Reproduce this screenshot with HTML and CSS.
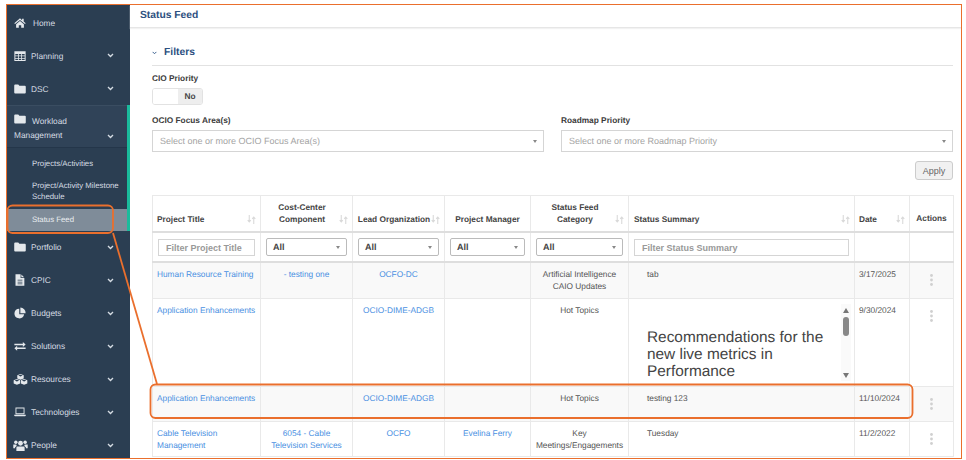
FILE: index.html
```html
<!DOCTYPE html>
<html lang="en">
<head>
    <meta charset="UTF-8">
    <title>Status Feed</title>
    <link rel="stylesheet" href="styles.css">
</head>
<body>
    <svg class="icon-defs" width="0" height="0">
        <defs>
            <symbol id="i-home" viewBox="0 0 16 16"><path d="M8 1.800 .4 8.200l1 1.200L8 3.900l6.600 5.500 1-1.200-2.700-2.300V2.400h-2.100v1.800zM2.800 9.700 8 5.300l5.200 4.400v4.700H9.600v-3.500H6.400v3.500H2.800z"/></symbol>
            <symbol id="i-table" viewBox="0 0 16 16"><path fill-rule="evenodd" d="M.5 1.500h15v13H.5zm1.300 3.700v2.200h3.500V5.200zm4.600 0v2.200h3.200V5.200zm4.300 0v2.200h3.500V5.200zM1.800 8.400v2.200h3.500V8.400zm4.600 0v2.200h3.200V8.400zm4.300 0v2.200h3.500V8.400zM1.800 11.600v1.700h3.500v-1.700zm4.600 0v1.700h3.200v-1.700zm4.300 0v1.700h3.500v-1.700z"/></symbol>
            <symbol id="i-folder" viewBox="0 0 16 16"><path d="M.3 3.300A1.300 1.300 0 0 1 1.600 2h4.100l1.400 1.700h7.300a1.300 1.300 0 0 1 1.300 1.300v7.700a1.300 1.300 0 0 1-1.300 1.300H1.600a1.300 1.300 0 0 1-1.300-1.300z"/></symbol>
            <symbol id="i-file" viewBox="0 0 16 16"><path fill-rule="evenodd" d="M2 .3h6.800v5h5v10.400H2zM4.800 7.800v1h6.400v-1zm0 2.400v1h6.400v-1zm0 2.400v1h6.400v-1zM9.800.6l3.700 3.700H9.800z"/></symbol>
            <symbol id="i-pie" viewBox="0 0 16 16"><path d="M7 2.200a6.500 6.500 0 1 0 6.500 7.600H7zM8.500.8v7.400h7A7.200 7.200 0 0 0 8.500.8z"/></symbol>
            <symbol id="i-exchange" viewBox="0 0 16 16"><path d="M.5 5h11.300V2.800L15.500 6l-3.700 3.200V7H.5zM15.500 10H4.200V7.800L.5 11l3.700 3.200V12h11.300z"/></symbol>
            <symbol id="i-cubes" viewBox="0 0 20 16"><path fill-rule="evenodd" d="M10 .6l4.300 1.700v4.300L10 8.300 5.700 6.600V2.300zM7 2.700l3 1.200 3-1.200-3-1.100zM5.200 7.200l4.300 1.700v4.300l-4.300 1.800L.9 13.200V8.900zM2.200 9.300l3 1.200 3-1.200-3-1.100zM14.800 7.200l4.300 1.700v4.300L14.800 15l-4.300-1.800V8.900zM11.800 9.300l3 1.200 3-1.200-3-1.100z"/></symbol>
            <symbol id="i-laptop" viewBox="0 0 16 16"><path fill-rule="evenodd" d="M2 2h12v9H2zm1.200 1.200v6.600h9.600V3.200zM.2 11.800h15.600v.8l-1 1H1.200l-1-1z"/></symbol>
            <symbol id="i-users" viewBox="0 0 20 16"><circle cx="10" cy="5" r="3.200"/><circle cx="3.800" cy="3.700" r="2.300"/><circle cx="16.200" cy="3.700" r="2.300"/><path d="M5.500 9.400h9l1 1.400v4.400h-11v-4.400zM.4 6.600h3.900l.7 2-2.200 1.600v1.300H.4zM19.600 6.600h-3.900l-.7 2 2.200 1.600v1.300h2.400z"/></symbol>
            <symbol id="i-sort" viewBox="0 0 10 10"><path d="M2.500 0v7.500M.8 5.800l1.700 2 1.700-2M7.500 10V2.500M5.800 4.200l1.700-2 1.700 2" fill="none" stroke="currentColor" stroke-width="1.200"/></symbol>
            <symbol id="i-chevron" viewBox="0 0 8 6"><path d="M1 1.200l3 3 3-3" fill="none" stroke="currentColor" stroke-width="1.600"/></symbol>
        </defs>
    </svg>

    <div class="frame">
        <aside class="sidebar">
            <a class="nav-item nav-home"><svg class="nav-icon"><use href="#i-home"/></svg><span>Home</span></a>
            <a class="nav-item"><svg class="nav-icon"><use href="#i-table"/></svg><span>Planning</span><svg class="chev"><use href="#i-chevron"/></svg></a>
            <a class="nav-item"><svg class="nav-icon"><use href="#i-folder"/></svg><span>DSC</span><svg class="chev"><use href="#i-chevron"/></svg></a>

            <div class="nav-group">
                <a class="nav-group-head">
                    <span class="nav-group-label"><svg class="nav-icon"><use href="#i-folder"/></svg>Workload Management</span>
                    <svg class="chev"><use href="#i-chevron"/></svg>
                </a>
                <a class="sub-item">Projects/Activities</a>
                <a class="sub-item sub-double">Project/Activity Milestone Schedule</a>
                <a class="sub-item sub-active">Status Feed</a>
            </div>

            <a class="nav-item"><svg class="nav-icon"><use href="#i-folder"/></svg><span>Portfolio</span><svg class="chev"><use href="#i-chevron"/></svg></a>
            <a class="nav-item"><svg class="nav-icon"><use href="#i-file"/></svg><span>CPIC</span><svg class="chev"><use href="#i-chevron"/></svg></a>
            <a class="nav-item"><svg class="nav-icon"><use href="#i-pie"/></svg><span>Budgets</span><svg class="chev"><use href="#i-chevron"/></svg></a>
            <a class="nav-item"><svg class="nav-icon"><use href="#i-exchange"/></svg><span>Solutions</span><svg class="chev"><use href="#i-chevron"/></svg></a>
            <a class="nav-item"><svg class="nav-icon nav-icon-wide"><use href="#i-cubes"/></svg><span>Resources</span><svg class="chev"><use href="#i-chevron"/></svg></a>
            <a class="nav-item"><svg class="nav-icon"><use href="#i-laptop"/></svg><span>Technologies</span><svg class="chev"><use href="#i-chevron"/></svg></a>
            <a class="nav-item"><svg class="nav-icon nav-icon-wide"><use href="#i-users"/></svg><span>People</span><svg class="chev"><use href="#i-chevron"/></svg></a>
        </aside>

        <main class="main">
            <header class="page-head">Status Feed</header>

            <div class="content">
                <div class="filters-head">
                    <svg class="filters-chev"><use href="#i-chevron"/></svg>
                    <span>Filters</span>
                </div>

                <label class="field-label">CIO Priority</label>
                <div class="toggle">
                    <span class="toggle-off"></span>
                    <span class="toggle-no">No</span>
                </div>

                <div class="filter-grid">
                    <div>
                        <label class="field-label">OCIO Focus Area(s)</label>
                        <div class="multi-select">Select one or more OCIO Focus Area(s)<i class="caret"></i></div>
                    </div>
                    <div>
                        <label class="field-label">Roadmap Priority</label>
                        <div class="multi-select">Select one or more Roadmap Priority<i class="caret"></i></div>
                    </div>
                </div>

                <div class="apply-row"><button class="btn-apply">Apply</button></div>

                <table class="feed">
                    <colgroup>
                        <col class="c-title"><col class="c-cost"><col class="c-org"><col class="c-pm">
                        <col class="c-cat"><col class="c-summary"><col class="c-date"><col class="c-actions">
                    </colgroup>
                    <thead>
                        <tr class="head-row">
                            <th><div class="th-in th-left"><span>Project Title</span><svg class="sort"><use href="#i-sort"/></svg></div></th>
                            <th><div class="th-in"><span>Cost-Center Component</span><svg class="sort"><use href="#i-sort"/></svg></div></th>
                            <th><div class="th-in"><span>Lead Organization</span><svg class="sort"><use href="#i-sort"/></svg></div></th>
                            <th><div class="th-in"><span>Project Manager</span></div></th>
                            <th><div class="th-in"><span>Status Feed Category</span><svg class="sort"><use href="#i-sort"/></svg></div></th>
                            <th class="th-summary"><div class="th-in th-left"><span>Status Summary</span><svg class="sort"><use href="#i-sort"/></svg></div></th>
                            <th><div class="th-in th-left"><span>Date</span><svg class="sort"><use href="#i-sort"/></svg></div></th>
                            <th class="th-actions"><div class="th-in"><span>Actions</span></div></th>
                        </tr>
                        <tr class="filter-row">
                            <td><input class="col-input" placeholder="Filter Project Title"></td>
                            <td><div class="col-select">All<i class="caret"></i></div></td>
                            <td><div class="col-select">All<i class="caret"></i></div></td>
                            <td><div class="col-select">All<i class="caret"></i></div></td>
                            <td><div class="col-select">All<i class="caret"></i></div></td>
                            <td><input class="col-input" placeholder="Filter Status Summary"></td>
                            <td></td>
                            <td></td>
                        </tr>
                    </thead>
                    <tbody>
                        <tr class="row-a odd">
                            <td><a>Human Resource Training</a></td>
                            <td class="mid"><a>- testing one</a></td>
                            <td class="mid"><a>OCFO-DC</a></td>
                            <td></td>
                            <td class="mid">Artificial Intelligence CAIO Updates</td>
                            <td><div class="summary">tab</div></td>
                            <td>3/17/2025</td>
                            <td class="act"><svg class="kebab" viewBox="0 0 3 12"><circle cx="1.500" cy="1.500" r="1.400"/><circle cx="1.500" cy="6" r="1.400"/><circle cx="1.500" cy="10.500" r="1.400"/></svg></td>
                        </tr>
                        <tr class="row-b">
                            <td><a>Application Enhancements</a></td>
                            <td></td>
                            <td class="mid"><a>OCIO-DIME-ADGB</a></td>
                            <td></td>
                            <td class="mid">Hot Topics</td>
                            <td>
                                <div class="scroller">
                                    <p class="scroller-text">Recommendations for the new live metrics in Performance</p>
                                    <div class="scrollbar">
                                        <i class="arrow-up"></i>
                                        <i class="thumb"></i>
                                        <i class="arrow-down"></i>
                                    </div>
                                </div>
                            </td>
                            <td>9/30/2024</td>
                            <td class="act"><svg class="kebab" viewBox="0 0 3 12"><circle cx="1.500" cy="1.500" r="1.400"/><circle cx="1.500" cy="6" r="1.400"/><circle cx="1.500" cy="10.500" r="1.400"/></svg></td>
                        </tr>
                        <tr class="row-c odd">
                            <td><a>Application Enhancements</a></td>
                            <td></td>
                            <td class="mid"><a>OCIO-DIME-ADGB</a></td>
                            <td></td>
                            <td class="mid">Hot Topics</td>
                            <td><div class="summary">testing 123</div></td>
                            <td>11/10/2024</td>
                            <td class="act"><svg class="kebab" viewBox="0 0 3 12"><circle cx="1.500" cy="1.500" r="1.400"/><circle cx="1.500" cy="6" r="1.400"/><circle cx="1.500" cy="10.500" r="1.400"/></svg></td>
                        </tr>
                        <tr class="row-c">
                            <td><a>Cable Television Management</a></td>
                            <td class="mid"><a>6054 - Cable Television Services</a></td>
                            <td class="mid"><a>OCFO</a></td>
                            <td class="mid"><a>Evelina Ferry</a></td>
                            <td class="mid">Key Meetings/Engagements</td>
                            <td><div class="summary">Tuesday</div></td>
                            <td>11/2/2022</td>
                            <td class="act"><svg class="kebab" viewBox="0 0 3 12"><circle cx="1.500" cy="1.500" r="1.400"/><circle cx="1.500" cy="6" r="1.400"/><circle cx="1.500" cy="10.500" r="1.400"/></svg></td>
                        </tr>
                    </tbody>
                </table>
            </div>
        </main>

        <!-- callouts drawn on top of the screenshot -->
        <svg class="callouts" viewBox="0 0 966 460">
            <rect x="7.500" y="205.500" width="105.500" height="27.500" rx="5"/>
            <path d="M113 233 157 384"/>
            <rect x="150.500" y="384.500" width="762" height="33.500" rx="5"/>
        </svg>
    </div>
</body>
</html>
```

FILE: styles.css
```css
:root {
    --nav-bg: #2b3e52;
    --nav-text: #d5dce3;
    --teal: #1abb9c;
    --orange: #ea6f2d;
    --line: #e9e9e9;
    --link: #4a90e2;
    --heading: #2d5080;
    --text: #555;
}

* {
    box-sizing: border-box;
}

body {
    margin: 0;
    padding: 4px 0 0 6px;
    background: #fff;
    font-family: "Liberation Sans", Arial, sans-serif;
    font-size: 8.300px;
    line-height: 12px;
    color: var(--text);
    overflow: hidden;
    text-rendering: geometricPrecision;
}

.icon-defs {
    position: absolute;
}

.frame {
    display: flex;
    width: 956px;
    height: 455px;
    border: 1px solid var(--orange);
    overflow: hidden;
}

.callouts {
    position: absolute;
    left: 0;
    top: 0;
    width: 966px;
    height: 460px;
    pointer-events: none;
}

.callouts rect,
.callouts path {
    fill: none;
    stroke: var(--orange);
    stroke-width: 1.800;
}

/* sidebar */
.sidebar {
    flex: 0 0 123px;
    padding-top: 1px;
    background: var(--nav-bg);
    color: var(--nav-text);
}

.nav-item {
    display: flex;
    align-items: center;
    height: 33px;
    padding: 0 16px 0 7px;
}

.nav-item span {
    flex: 1;
}

.nav-home span {
    padding-left: 2px;
}

.nav-icon {
    flex: none;
    width: 12px;
    height: 12px;
    margin-right: 5px;
    fill: #e4e8ec;
    vertical-align: -1px;
}

.nav-icon-wide {
    width: 15px;
    height: 13px;
    margin-left: -1px;
    margin-right: 3px;
}

.chev {
    flex: none;
    width: 7px;
    height: 5px;
    color: #d5dce3;
}

.nav-group {
    border-right: 3px solid var(--teal);
}

.nav-group-head {
    display: flex;
    align-items: flex-end;
    height: 43px;
    padding: 0 13px 5px 7px;
    background: #304358;
    border-top: 1px solid #3a4d61;
    border-bottom: 1px solid #24364a;
}

.nav-group-label {
    flex: 1;
    line-height: 14px;
    width: 76px;
    padding-right: 20px;
}

.nav-group-head .chev {
    margin-bottom: 3px;
}

.nav-group-head .nav-icon {
    margin-right: 6px;
}

.sub-item {
    display: block;
    padding: 0 0 0 25px;
    font-size: 7.800px;
    line-height: 11.500px;
}

.sub-item:nth-child(2) {
    padding-top: 10px;
    padding-bottom: 5px;
}

.sub-double {
    padding-top: 5px;
    padding-bottom: 6px;
}

.sub-active {
    height: 22px;
    line-height: 22px;
    background: #7f8c99;
    color: #e9edf0;
}

/* main */
.main {
    flex: 1;
    min-width: 0;
}

.page-head {
    height: 23px;
    padding-left: 10px;
    border-bottom: 1px solid #e6e6e6;
    box-shadow: 0 1px 1px #f2f2f2;
    font-size: 10.300px;
    font-weight: bold;
    line-height: 22px;
    color: var(--heading);
}

.content {
    width: 823px;
    padding: 0 0 0 22px;
}

.filters-head {
    display: flex;
    align-items: center;
    gap: 7px;
    height: 21px;
    margin-top: 17px;
    padding-bottom: 4px;
    border-bottom: 1px solid #e2e2e2;
    font-size: 10.300px;
    font-weight: bold;
    color: var(--heading);
}

.filters-chev {
    width: 5px;
    height: 4px;
    color: #3d6390;
}

.field-label {
    display: block;
    margin-top: 6px;
    font-weight: bold;
    color: #3b3b3b;
}

.toggle {
    display: flex;
    width: 51px;
    height: 17px;
    margin-top: 4px;
    border: 1px solid #e2e2e2;
    border-radius: 3px;
    overflow: hidden;
}

.toggle-off {
    width: 25px;
    background: #fff;
}

.toggle-no {
    flex: 1;
    background: #eee;
    font-weight: bold;
    line-height: 15px;
    text-align: center;
    color: #444;
}

.filter-grid {
    display: grid;
    grid-template-columns: 392px 392px;
    gap: 17px;
    margin-top: 3px;
}

.filter-grid .field-label {
    margin-top: 6px;
}

.multi-select {
    display: flex;
    align-items: center;
    justify-content: space-between;
    height: 22px;
    margin-top: 4px;
    padding: 0 6px 0 7px;
    border: 1px solid #d5d5d5;
    font-size: 9px;
    color: #a3a3a3;
}

.caret {
    width: 0;
    height: 0;
    border-left: 2.500px solid transparent;
    border-right: 2.500px solid transparent;
    border-top: 3px solid #888;
}

.apply-row {
    display: flex;
    justify-content: flex-end;
    width: 801px;
    margin-top: 9px;
}

.btn-apply {
    width: 38px;
    height: 19px;
    padding: 0;
    border: 1px solid #ccc;
    border-radius: 3px;
    background: #f1f1f1;
    font: 9px "Liberation Sans", Arial, sans-serif;
    color: #666;
}

/* table */
.feed {
    width: 801px;
    margin-top: 15px;
    border-collapse: collapse;
    table-layout: fixed;
}

.c-title { width: 108px; }
.c-cost { width: 92px; }
.c-org { width: 92px; }
.c-pm { width: 86px; }
.c-cat { width: 98px; }
.c-summary { width: 226px; }
.c-date { width: 55px; }
.c-actions { width: 44px; }

.feed th,
.feed td {
    border: 1px solid var(--line);
    padding: 5px 4px;
    vertical-align: top;
}

.head-row {
    height: 36px;
}

.feed th {
    padding: 5px 4px 6px 4px;
    border-bottom: 2px solid #dedede;
    vertical-align: bottom;
    font-weight: bold;
    color: #444;
}

.feed .th-summary {
    padding-left: 5px;
}

.th-in {
    display: flex;
    align-items: flex-end;
    text-align: center;
}

.th-in span {
    flex: 1;
}

.th-left {
    text-align: left;
}

.sort {
    flex: none;
    width: 9px;
    height: 9px;
    margin-bottom: 1px;
    color: #d9d9d9;
}

.th-actions .th-in {
    padding-bottom: 1px;
}

.filter-row {
    height: 30px;
}

.feed .filter-row td {
    padding: 5px 5px 0;
    border-bottom: 2px solid #dedede;
}

.col-input {
    display: block;
    width: 100%;
    height: 17px;
    margin-top: 1px;
    padding: 0 7px;
    border: 1px solid #d5d5d5;
    font: bold 9px "Liberation Sans", Arial, sans-serif;
    color: #555;
}

.col-input::placeholder {
    color: #999;
}

.col-select {
    display: flex;
    align-items: center;
    justify-content: space-between;
    height: 18px;
    padding: 0 6px;
    border: 1px solid #bbb;
    border-radius: 2px;
    font-size: 9px;
    font-weight: bold;
    color: #444;
}

.feed a {
    color: var(--link);
}

.odd td {
    background: #f9f9f9;
}

.mid {
    text-align: center;
}

.row-a {
    height: 36px;
}

.row-b {
    height: 88px;
}

.row-c {
    height: 35px;
}

.summary {
    padding-left: 14px;
}

.scroller {
    display: flex;
    height: 77px;
    margin-right: -1px;
    overflow: hidden;
}

.scroller-text {
    flex: 1;
    margin: 0;
    padding: 25px 0 0 14px;
    font-size: 15.400px;
    line-height: 17px;
    color: #444;
}

.scrollbar {
    display: flex;
    flex-direction: column;
    align-items: center;
    flex: 0 0 10px;
    padding: 4px 0 3px;
    background: #fafafa;
}

.arrow-up,
.arrow-down {
    width: 0;
    height: 0;
    border-left: 3px solid transparent;
    border-right: 3px solid transparent;
}

.arrow-up {
    border-bottom: 5px solid #777;
}

.arrow-down {
    margin-top: auto;
    border-top: 5px solid #777;
}

.thumb {
    width: 6px;
    height: 19px;
    margin-top: 4px;
    border-radius: 3px;
    background: #888;
}

.feed .act {
    padding-top: 11px;
}

.kebab {
    display: block;
    width: 3px;
    height: 12px;
    margin: 0 auto;
    fill: #d0d0d0;
}
```
